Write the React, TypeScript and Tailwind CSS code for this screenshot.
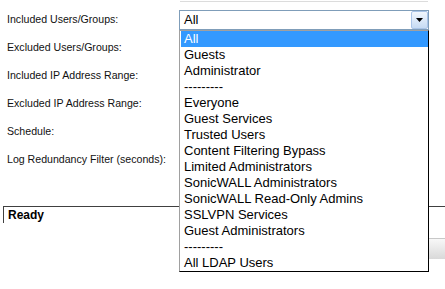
const labels = [
  "Included Users/Groups:",
  "Excluded Users/Groups:",
  "Included IP Address Range:",
  "Excluded IP Address Range:",
  "Schedule:",
  "Log Redundancy Filter (seconds):",
];

const options = [
  "All",
  "Guests",
  "Administrator",
  "---------",
  "Everyone",
  "Guest Services",
  "Trusted Users",
  "Content Filtering Bypass",
  "Limited Administrators",
  "SonicWALL Administrators",
  "SonicWALL Read-Only Admins",
  "SSLVPN Services",
  "Guest Administrators",
  "---------",
  "All LDAP Users",
];

function GroupSelect() {
  return (
    <div className="relative w-[250px] h-[20px] border border-[#7f9db9] bg-white">
      <div className="pl-[4px] text-[13px] leading-[18px] text-black font-['Liberation_Sans',Arial,sans-serif]">
        All
      </div>
      <div className="absolute right-0 top-0 bottom-0 w-[17px] border border-[#a9c4e8] rounded-[2px] bg-gradient-to-b from-[#f2f7fd] to-[#c6dbf4] flex items-center justify-center">
        <svg width="7" height="4" viewBox="0 0 7 4">
          <polygon points="0,0 7,0 3.5,4" fill="#000" />
        </svg>
      </div>
      <ul className="absolute z-10 left-[-1px] top-[19px] w-[250px] bg-white border border-black border-l-[#a0a0a0] border-t-[#a0a0a0] pl-[1px] font-['Liberation_Sans',Arial,sans-serif] text-[13px]">
        {options.map((o, i) => (
          <li
            key={i}
            className={
              i === 0
                ? "h-[16px] leading-[16px] pl-[3px] bg-[#3399ff] text-white"
                : "h-[16px] leading-[16px] pl-[3px] text-black"
            }
          >
            {o}
          </li>
        ))}
      </ul>
    </div>
  );
}

export default function App() {
  return (
    <div className="relative w-[445px] h-[289px] bg-white overflow-hidden font-['Liberation_Sans',Arial,sans-serif]">
      <div className="ml-[180px] w-[248px] h-[2px] border-b border-[#dcdcdc]"></div>
      <div className="mt-[4px] flex flex-col">
        {labels.map((l, i) => (
          <div key={l} className="flex items-center h-[28px]">
            <div className="w-[179px] pl-[7px] text-[10.6px] text-[#111]">{l}</div>
            {i === 0 && <GroupSelect />}
          </div>
        ))}
      </div>
      <div className="mt-[32px] ml-[3px] h-[17px] border-t border-l border-[#404040] border-b-[#a0a0a0] pl-[4px] text-[12px] leading-[16px] font-bold text-black">
        Ready
      </div>
      <div className="mt-[15px] flex justify-end">
        <div className="w-[90px] h-[21px] border-t border-[#c8c8c8] bg-gradient-to-b from-[#f8f8f8] to-[#d9d9d9]"></div>
      </div>
    </div>
  );
}
